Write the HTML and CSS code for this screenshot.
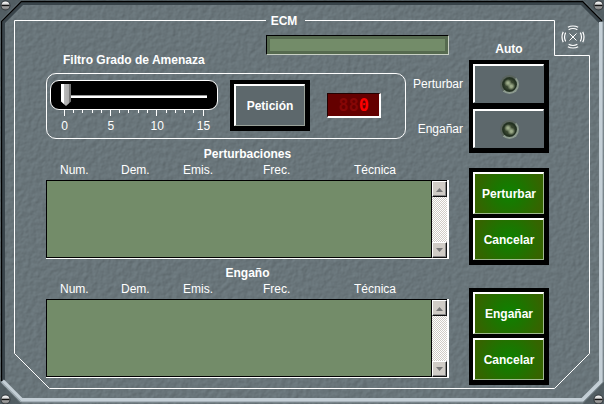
FILE: index.html
```html
<!DOCTYPE html>
<html lang="es">
<head>
<meta charset="utf-8">
<title>ECM</title>
<link rel="stylesheet" href="styles.css">
</head>
<body>
<svg class="frame" viewBox="0 0 604 404" preserveAspectRatio="none" aria-hidden="true">
  <defs>
    <filter id="grain" x="0" y="0" width="100%" height="100%" color-interpolation-filters="sRGB">
      <feTurbulence type="fractalNoise" baseFrequency="0.2" numOctaves="3" seed="4" result="n"/>
      <feDiffuseLighting in="n" surfaceScale="0.35" diffuseConstant="1.22" lighting-color="#69757a">
        <feDistantLight azimuth="225" elevation="55"/>
      </feDiffuseLighting>
    </filter>
    <linearGradient id="metal" x1="0" y1="0" x2="0" y2="1">
      <stop offset="0" stop-color="#fff"/><stop offset="1" stop-color="#777"/>
    </linearGradient>
    <g id="screw">
      <circle r="5" fill="#30363a"/>
      <circle r="4" fill="url(#metal)"/>
      <path d="M-4 0H4" stroke="#111" stroke-width="1.5"/>
    </g>
  </defs>
  <rect width="604" height="404" fill="#69757a"/>
  <rect width="604" height="404" filter="url(#grain)"/>
  <path d="M0 0H21L0 21ZM604 0H583L604 21ZM0 404H21L0 382ZM604 404H583L604 382Z" fill="#404a50" fill-opacity=".55"/>
  <path d="M3.500 381V22.500L22.500 3.500H581.500L600 22" fill="none" stroke="#39444a" stroke-width="3"/>
  <path d="M1.500 381V21.500L21.500 1.500H582.500L602 21" fill="none" stroke="#000" stroke-width="1.300"/>
  <path d="M2.500 381L21.500 400H582.500L601 381.500V22" fill="none" stroke="#c3ced5" stroke-width="4"/>
  <path d="M1.500 382L21.500 402H583L603 382V22" fill="none" stroke="#89959c" stroke-width="1"/>
  <path d="M266 20.500H14.500V353.500L49.500 388.500H554.500L589.500 353.500V55.500H554.500V20.500H305" fill="none" stroke="#fff"/>
  <use href="#screw" x="5.500" y="5.500"/><use href="#screw" x="598.500" y="5.500"/>
  <use href="#screw" x="5.500" y="399.500"/><use href="#screw" x="598.500" y="399.500"/>
</svg>

<main class="console">
  <header class="title">
    <h1>ECM</h1>
    <button class="emblem" type="button" aria-label="Cerrar">
      <svg viewBox="0 0 24 24" width="24" height="24" fill="none" stroke="#fff" stroke-width="1.200">
        <path d="M8.500 8.500L15.500 15.500M15.500 8.500L8.500 15.500" stroke-width="1"/>
        <circle cx="12" cy="12" r="11" pathLength="360" stroke-dasharray="56 34" stroke-dashoffset="28"/>
        <circle cx="12" cy="12" r="8.500" pathLength="360" stroke-dasharray="62 28" stroke-dashoffset="31"/>
      </svg>
    </button>
  </header>

  <div class="columns">
    <div class="left">
      <div class="top">
        <label class="filter-label" for="grado">Filtro Grado de Amenaza</label>
        <input class="readout" type="text" readonly aria-label="ECM">
      </div>

      <div class="group">
        <div class="scale">
          <div class="slot"><input id="grado" type="range" min="0" max="15" value="0"></div>
          <svg class="ticks" viewBox="0 0 168 7" aria-hidden="true">
            <path d="M14.500 0V6M60.500 0V6M106.500 0V6M153.500 0V6M23.500 0V3M32.500 0V3M42.500 0V3M51.500 0V3M69.500 0V3M78.500 0V3M88.500 0V3M97.500 0V3M116.500 0V3M125.500 0V3M134.500 0V3M143.500 0V3" stroke="#fff"/>
          </svg>
          <div class="numbers"><span>0</span><span>5</span><span>10</span><span>15</span></div>
        </div>
        <div class="bezel request"><button class="key" type="button">Petición</button></div>
        <output class="digits" for="grado"><span class="unlit">88</span>0</output>
      </div>

      <table class="list">
        <caption>Perturbaciones</caption>
        <thead><tr><th>Num.</th><th>Dem.</th><th>Emis.</th><th>Frec.</th><th>Técnica</th></tr></thead>
        <tbody><tr><td colspan="5">
          <div class="box">
            <div class="rows"></div>
            <div class="bar">
              <button type="button" aria-label="Subir"><svg viewBox="0 0 9 5" width="9" height="5"><path d="M1 5L4.500 1L8 5Z"/></svg></button>
              <button type="button" aria-label="Bajar"><svg viewBox="0 0 9 5" width="9" height="5"><path d="M1 0L4.500 4L8 0Z"/></svg></button>
            </div>
          </div>
        </td></tr></tbody>
      </table>

      <table class="list">
        <caption>Engaño</caption>
        <thead><tr><th>Num.</th><th>Dem.</th><th>Emis.</th><th>Frec.</th><th>Técnica</th></tr></thead>
        <tbody><tr><td colspan="5">
          <div class="box">
            <div class="rows"></div>
            <div class="bar">
              <button type="button" aria-label="Subir"><svg viewBox="0 0 9 5" width="9" height="5"><path d="M1 5L4.500 1L8 5Z"/></svg></button>
              <button type="button" aria-label="Bajar"><svg viewBox="0 0 9 5" width="9" height="5"><path d="M1 0L4.500 4L8 0Z"/></svg></button>
            </div>
          </div>
        </td></tr></tbody>
      </table>
    </div>

    <div class="right">
      <h2>Auto</h2>
      <div class="auto">
        <div class="auto-labels">
          <label for="auto-perturbar">Perturbar</label>
          <label for="auto-enganar">Engañar</label>
        </div>
        <div class="bezel toggles">
          <button class="key lamp" id="auto-perturbar" type="button"><i></i></button>
          <button class="key lamp" id="auto-enganar" type="button"><i></i></button>
        </div>
      </div>
      <div class="bezel actions">
        <button class="key green" type="button">Perturbar</button>
        <button class="key green" type="button">Cancelar</button>
      </div>
      <div class="bezel actions">
        <button class="key green" type="button">Engañar</button>
        <button class="key green" type="button">Cancelar</button>
      </div>
    </div>
  </div>
</main>
</body>
</html>
```
FILE: styles.css
```css
* { box-sizing: border-box; }

body {
  margin: 0;
  min-height: 100vh;
  position: relative;
  background: #69757a;
  color: #fff;
  font: 12px/16px "Liberation Sans", Arial, sans-serif;
}

h1, h2 { margin: 0; font-size: 12px; line-height: 16px; text-align: center; }
button, input { font: inherit; color: inherit; margin: 0; padding: 0; }

.frame { position: absolute; inset: 0; width: 100%; height: 100%; }

.console { position: relative; padding: 13px 55px 19px 46px; }

.title { position: relative; padding-right: 27px; }

.emblem {
  position: absolute;
  right: -36px;
  top: 12px;
  width: 24px;
  height: 24px;
  background: none;
  border: 0;
}
.emblem svg { display: block; overflow: visible; }

.columns { display: flex; gap: 20px; padding-top: 6px; }
.left { flex: 1; min-width: 0; }
.right { width: 80px; padding-top: 6px; }

.top { display: flex; justify-content: space-between; height: 38px; }
.filter-label { padding: 17px 0 0 17px; font-weight: bold; white-space: nowrap; }

.readout {
  width: 183px;
  height: 20px;
  background: #738c69;
  border: 1px solid;
  border-color: #000 #c8d0c4 #c8d0c4 #000;
  box-shadow: inset 0 0 0 3px #566a4f;
}

.group {
  display: flex;
  height: 66px;
  margin-right: 43px;
  margin-bottom: 7px;
  padding: 6px 3px;
  border: 1px solid #fff;
  border-radius: 10px;
}

.scale { width: 168px; }
.slot {
  display: flex;
  align-items: center;
  height: 30px;
  padding: 0 10px;
  background: #000;
  border: 1px solid #fff;
  border-radius: 9px;
}
.slot input {
  appearance: none;
  width: 100%;
  height: 24px;
  background: linear-gradient(#999 34%, #fff 34%) center 12px / 100% 3px no-repeat;
}
.slot input::-webkit-slider-thumb {
  appearance: none;
  width: 10px;
  height: 22px;
  background: linear-gradient(90deg, #fff 30%, #bbb 30%, #aaa 80%, #777 80%);
  clip-path: polygon(0 0, 100% 0, 100% 80%, 50% 100%, 0 80%);
}
.ticks { display: block; width: 100%; }
.numbers { display: flex; justify-content: space-between; padding: 1px 1px 0; }
.numbers span { width: 27px; text-align: center; }

.bezel {
  display: flex;
  flex-direction: column;
  width: 80px;
  padding: 4px 5px 5px 4px;
  background: #000;
}
.key {
  background: #5d686c;
  border: 2px solid;
  border-color: #fff #99a199 #99a199 #fff;
  border-right-width: 1px;
  border-bottom-width: 1px;
  border-radius: 0;
  font-weight: bold;
}
.request { margin-left: 12px; height: 51px; }
.request .key { height: 42px; }

.digits {
  width: 54px;
  height: 25px;
  margin: 13px 0 0 17px;
  padding-right: 10px;
  background: #640000;
  border: 1px solid;
  border-color: #200 #fff #fff #200;
  border-right-width: 2px;
  border-bottom-width: 2px;
  color: #f00;
  font: bold 17px/23px "DejaVu Sans Mono", monospace;
  text-align: right;
}
.unlit { color: #860606; }

.list { width: 100%; table-layout: fixed; border-collapse: collapse; margin-bottom: 6px; }
.list caption { height: 16px; line-height: 16px; font-weight: bold; }
.list th { height: 18px; padding: 0 0 1px 14px; line-height: 17px; font-weight: normal; text-align: left; }
.list th:nth-child(1) { width: 61px; }
.list th:nth-child(2) { width: 62px; }
.list th:nth-child(3) { width: 80px; }
.list th:nth-child(4) { width: 91px; }
.list td { padding: 0; }

.box { display: flex; height: 79px; border-right: 2px solid #fff; border-bottom: 1px solid #fff; }
.rows { flex: 1; background: #738c69; border: 1px solid #000; }
.bar {
  display: flex;
  flex-direction: column;
  justify-content: space-between;
  width: 15px;
  border-top: 1px solid #000;
  background: repeating-conic-gradient(#fff 0 25%, #d0ccc6 0 50%) 0 0 / 2px 2px;
}
.bar button {
  display: grid;
  place-items: center;
  height: 16px;
  background: #d0ccc6;
  border: 1px solid;
  border-color: #fff #111 #111 #fff;
  box-shadow: inset -1px -1px #888;
}
.bar path { fill: #777; }

.right h2 { margin-bottom: 3px; }
.auto { display: flex; gap: 6px; margin-left: -57px; }
.auto-labels { display: flex; flex-direction: column; gap: 29px; width: 51px; padding-top: 16px; text-align: right; }
.toggles { gap: 6px; margin-bottom: 15px; }
.lamp { display: grid; place-items: center; height: 39px; border-color: #fff #5d686c #5d686c #fff; }
.lamp i {
  width: 19px;
  height: 19px;
  border: 2px solid;
  border-color: #59635d #8c9a8e #8c9a8e #59635d;
  border-radius: 50%;
  background:
    radial-gradient(circle at 40% 40%, #9baa88 0 8%, transparent 30%),
    radial-gradient(circle at 62% 62%, #9baa88 0 8%, transparent 30%),
    radial-gradient(circle, #37442f 0 40%, #223020 60%, #3d4a37 100%);
}
.actions { gap: 4px; margin-bottom: 23px; }
.actions:last-child { margin-bottom: 0; }
.green { height: 42px; background: radial-gradient(circle, #108000 5%, #1b7600 35%, #356400 85%); border-color: #fff #9fb98f #9fb98f #fff; }
```
